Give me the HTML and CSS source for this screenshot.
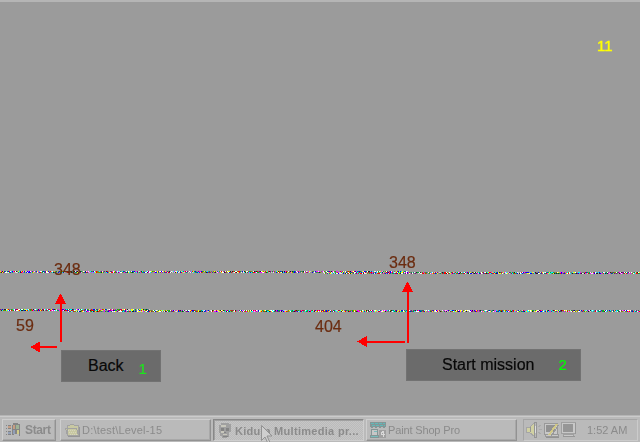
FILE: index.html
```html
<!DOCTYPE html>
<html lang="en">
<head>
<meta charset="utf-8">
<title>Desktop</title>
<link rel="stylesheet" href="styles.css">
</head>
<body>
<main class="scene">
  <canvas class="noise" width="640" height="415"></canvas>
  <svg class="arrows" width="640" height="415" viewBox="0 0 640 415" shape-rendering="crispEdges">
    <path d="M60 342V303h2v39zM57 346v2H39v-2zM407 343V291h2v52zM405 341v2H366v-2z"/>
    <path d="M60.500 293.500L66 304H55zM30 347l10-5.500v11zM407.500 281.500l5.500 10.500h-11zM357 341.500l10-5.500v11z"/>
  </svg>
  <span class="note score">11</span>
  <span class="note back-y">348</span>
  <span class="note back-x">59</span>
  <span class="note start-y">348</span>
  <span class="note start-x">404</span>
  <div class="choice back"><span>Back</span><b class="key">1</b></div>
  <div class="choice start"><span>Start mission</span><b class="key">2</b></div>
</main>
<footer class="taskbar">
  <div class="button start-button">
    <svg width="17" height="16" viewBox="0 0 17 16" shape-rendering="crispEdges">
      <path fill="#858585" d="M8 1h5v1h2v12h-1v-2h-5v1H7V3h1zM1 3h1v1H1zM3 3h3v1H3zM1 6h1v1H1zM3 6h3v1H3zM1 9h1v1H1zM3 9h3v1H3zM1 12h1v1H1zM3 12h3v1H3z"/>
      <path fill="#c69d83" d="M8 3h2v4H8zM3 4h3v2H3z"/><path fill="#9fb395" d="M11 3h3v4h-3z"/>
      <path fill="#929fb7" d="M8 8h2v4H8zM3 10h3v2H3z"/><path fill="#d2cc88" d="M12 8h2v4h-2z"/>
    </svg><span class="start-text">Start</span>
  </div>
  <div class="button task folder">
    <svg width="16" height="15" viewBox="0 0 16 15" shape-rendering="crispEdges">
      <path fill="#c8c8a2" stroke="#a2a2a2" d="M2.500 12.500v-10h2l1-1h3l1 1h4v10zM.5 5.500h11l2 7h-11z"/>
      <path stroke="#d5d5bb" stroke-dasharray="1 1" d="M3 7.500h8M4 9.500h8M5 11.500h8"/><path stroke="#959595" d="M3 13.500h12M14.500 4v9"/>
    </svg><span class="folder-text">D:\test\Level-15</span>
  </div>
  <div class="button task active">
    <svg width="14" height="17" viewBox="0 0 14 17" shape-rendering="crispEdges">
      <path fill="#a0a0a0" d="M3 1h8v1h2v8h-2v5H9v1H4v-2H2v-3H1V3h2z"/><path fill="#c8c7bc" d="M3 3h5v2H3zM3 9h3v2H3zM5 12h4v1H5z"/>
      <path fill="#848484" d="M3 6h3v3H3zM8 6h3v3H8zM6 10h2v1H6zM5 14h5v1H5z"/>
    </svg><span class="active-text">Kidum Multimedia pr...</span>
  </div>
  <div class="button task paint">
    <svg width="16" height="16" viewBox="0 0 16 16" shape-rendering="crispEdges">
      <path fill="#859595" d="M0 0h16v5h-1v1h-2V5h-2v1H9V5H7v1H5V5H3v1H1V5H0zM1 7h7v1H1zM1 8h1v6H1zM7 8h1v6H7zM0 13h9v3H0z"/>
      <path stroke="#61b9b9" stroke-dasharray="3 1" d="M1 1.500h14M2 3.500h13"/><path fill="#c7c7c7" d="M2 8h5v5H2z"/><path fill="#78bcbc" d="M4 9h3v1H4zM1 14h7v1H1z"/>
      <path fill="#a0a0a0" d="M9 8h7v8H9z"/><path fill="none" stroke="#d8d8d8" d="M13.500 9v6M13 9.500h-1v1h-1v2h4"/>
    </svg><span class="paint-text">Paint Shop Pro</span>
  </div>
  <div class="tray">
    <svg width="53" height="18" viewBox="0 0 53 18" shape-rendering="crispEdges">
      <path fill="#d1d1a2" stroke="#a5a5a5" d="M.5 6.500h3l5-5v14l-5-4h-3z"/><path fill="none" stroke="#959595" d="M8.500 1v15h2V1zM4.500 6v5"/><path fill="#ddd" d="M9 5h1v7H9z"/>
      <path stroke="#aaa" d="M12 6l3-2M13 8.500h3M12 11l3 2"/>
      <path fill="#c8c8c8" stroke="#999" d="M18.500 2.500h13v11h-13zM19.500 13.500h13v2h-13z"/><path fill="#929292" d="M20 4h9v7h-9zM20 16h13v1H20z"/>
      <path stroke="#d1c887" stroke-width="2" d="M31 3l-8 11"/><path stroke="#999" d="M32.500 4l-7 11"/>
      <path fill="#c8c8c8" stroke="#a0a0a0" d="M35.500 1.500h14v11h-14zM37.500 13.500h10v2h-10z"/><path fill="#969696" d="M37 3h10v8H37zM49 2h1v11h-1zM37 15h12v1H37z"/>
    </svg><span class="clock">1:52 AM</span>
  </div>
  <svg class="cursor" width="13" height="20" viewBox="0 0 13 20"><path fill="#cfcfcf" stroke="#929292" d="M.5.5v15l3.500-3.500 3 6.500 2-1-3-6.500h5z"/></svg>
</footer>
<script src="noise.js"></script>
</body>
</html>
```

FILE: styles.css
```css
* { box-sizing: border-box; }
body { margin: 0; width: 640px; height: 442px; overflow: hidden; background: #9b9b9b; font-family: "Liberation Sans", Arial, sans-serif; }
.scene { position: relative; height: 415px; border-top: 2px solid #b5b5b5; }
.noise, .arrows { position: absolute; left: 0; top: -2px; }
.arrows { fill: #f00; z-index: 1; }
.note { position: absolute; color: #6b2c10; font-size: 16px; line-height: 18px; -webkit-text-stroke: .2px currentColor; }
.score { left: 597px; top: 35px; color: #ff0; font-size: 15px; -webkit-text-stroke-width: .4px; }
.back-y { left: 54px; top: 259px; }
.back-x { left: 16px; top: 315px; }
.start-y { left: 389px; top: 252px; }
.start-x { left: 315px; top: 316px; }
.choice { position: absolute; display: flex; align-items: center; height: 32px; background: #6b6b6b; border: 1px solid #727272; color: #080808; font-size: 16px; -webkit-text-stroke: .2px currentColor; }
.back { left: 61px; top: 348px; width: 100px; padding-left: 26px; gap: 15px; }
.start { left: 406px; top: 347px; width: 175px; padding-left: 35px; gap: 23px; }
.key { color: #0f0; font-size: 15px; font-weight: 400; position: relative; top: -1px; }
.start .key { left: 1px; }
.back .key { color: #1ce61c; top: 2px; }
.taskbar { position: relative; display: flex; height: 27px; padding: 4px 2px 1px; background: #bababa; border-top: 1px solid #b5b5b5; box-shadow: inset 0 1px #cbcbcb; font-size: 11px; color: #8b8b8b; }
.button { display: flex; align-items: center; height: 22px; margin-top: -1px; border: 1px solid; border-color: #cecece #929292 #929292 #cecece; box-shadow: inset -1px -1px #a8a8a8; white-space: nowrap; }
.button svg, .tray svg { flex: none; }
.start-button { width: 54px; padding-left: 2px; gap: 3px; font-weight: 700; }
.start-text { font-size: 12px; letter-spacing: -.35px; }
.task { width: 151px; margin-left: 4px; padding-left: 4px; gap: 1px; }
.folder-text { letter-spacing: .2px; }
.active { margin-left: 2px; padding: 1px 0 0 4px; gap: 3px; font-weight: 700; border-color: #888 #cecece #cecece #888; box-shadow: inset 1px 1px #a0a0a0; background: repeating-conic-gradient(#bbb 0 25%, #c6c6c6 0 50%) 0 0 / 2px 2px; }
.active-text { letter-spacing: .3px; }
.paint { margin-left: 2px; padding-left: 3px; gap: 2px; }
.paint-text { letter-spacing: -.15px; }
.tray { display: flex; align-items: center; width: 115px; height: 22px; margin: -1px 0 0 6px; padding-left: 2px; gap: 8px; border: 1px solid; border-color: #a5a5a5 #cbcbcb #cbcbcb #a5a5a5; white-space: nowrap; }
.cursor { position: absolute; left: 261px; top: 9px; }
```

FILE: noise.js
```js
// Draw the two horizontal bands of coloured static.
const ctx = document.querySelector('.noise').getContext('2d');
const colors = ['#222', '#fff', '#f0f', '#0ff', '#ff0', '#00f', '#f00', '#0a3', '#808', '#088', '#880', '#777', '#ccc', '#eee', '#8b8b8b', '#9b9b9b'];
let seed = 37;
function next() {
  seed = (Math.imul(seed, 1664525) + 1013904223) >>> 0;
  return seed / 4294967296;
}
function band(from, to, y, rows) {
  for (let x = from; x < to; x++) {
    for (let row = 0; row < rows; row++) {
      ctx.fillStyle = colors[Math.floor(next() * colors.length)];
      ctx.fillRect(x, y + row, 1, 1);
    }
  }
}
band(0, 324, 271, 2);
band(324, 408, 271, 3);
band(408, 640, 272, 2);
band(0, 68, 309, 2);
band(68, 150, 309, 3);
band(150, 640, 310, 2);
```
